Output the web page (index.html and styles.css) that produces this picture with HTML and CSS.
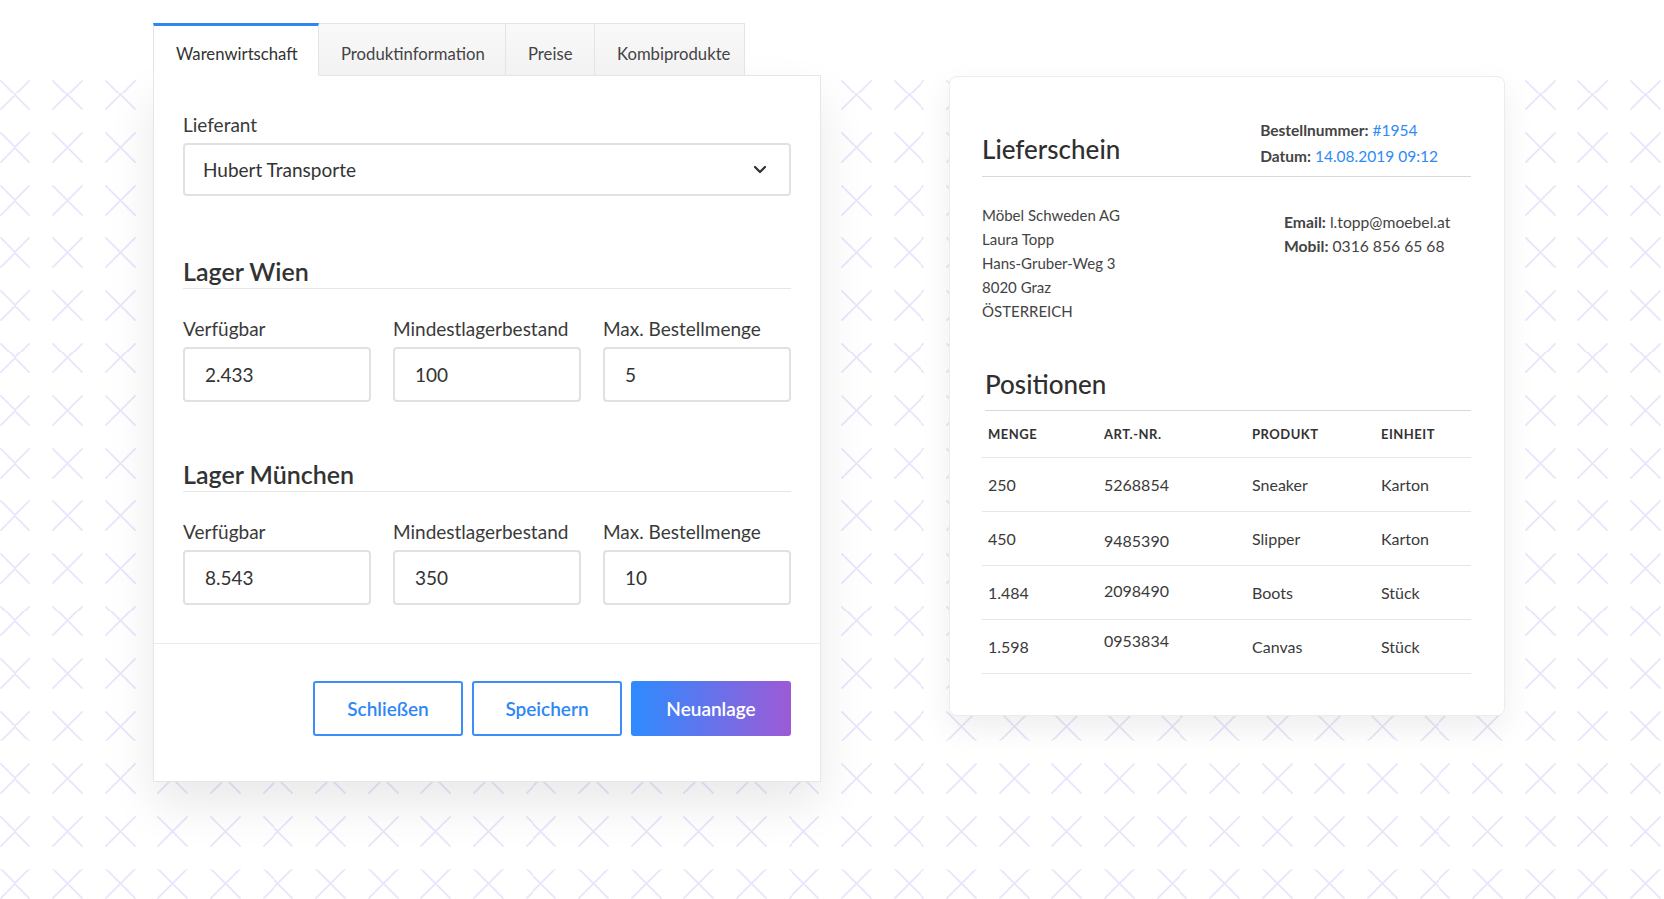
FILE: index.html
```html
<!DOCTYPE html>
<html lang="de">
<head>
    <meta charset="UTF-8">
    <meta name="viewport" content="width=device-width, initial-scale=1.0">
    <title>Warenwirtschaft</title>
    <link rel="stylesheet" href="styles.css">
</head>
<body>
    <div class="scene">
        <!-- Produkt-Editor -->
        <section class="editor">
            <nav class="tabs">
                <div class="tab tab-active tab-stock">Warenwirtschaft</div>
                <div class="tab tab-info">Produktinformation</div>
                <div class="tab tab-price">Preise</div>
                <div class="tab tab-combo">Kombiprodukte</div>
                <div class="tab-fill"></div>
            </nav>

            <div class="panel">
                <div class="panel-body">
                    <div class="field field-supplier">
                        <div class="field-label">Lieferant</div>
                        <div class="select">
                            <span>Hubert Transporte</span>
                            <svg width="14" height="9" viewBox="0 0 14 9">
                                <path d="M2 2l5 5 5-5" fill="none" stroke="#2f2f2f" stroke-width="2.2" stroke-linecap="round" stroke-linejoin="round"/>
                            </svg>
                        </div>
                    </div>

                    <div class="stock">
                        <h2 class="stock-title">Lager Wien</h2>
                        <div class="stock-fields">
                            <div class="field">
                                <div class="field-label">Verfügbar</div>
                                <div class="input">2.433</div>
                            </div>
                            <div class="field">
                                <div class="field-label">Mindestlagerbestand</div>
                                <div class="input">100</div>
                            </div>
                            <div class="field">
                                <div class="field-label">Max. Bestellmenge</div>
                                <div class="input">5</div>
                            </div>
                        </div>
                    </div>

                    <div class="stock">
                        <h2 class="stock-title">Lager München</h2>
                        <div class="stock-fields">
                            <div class="field">
                                <div class="field-label">Verfügbar</div>
                                <div class="input">8.543</div>
                            </div>
                            <div class="field">
                                <div class="field-label">Mindestlagerbestand</div>
                                <div class="input">350</div>
                            </div>
                            <div class="field">
                                <div class="field-label">Max. Bestellmenge</div>
                                <div class="input">10</div>
                            </div>
                        </div>
                    </div>
                </div>

                <div class="panel-footer">
                    <button class="btn btn-outline">Schließen</button>
                    <button class="btn btn-outline">Speichern</button>
                    <button class="btn btn-primary">Neuanlage</button>
                </div>
            </div>
        </section>

        <!-- Lieferschein -->
        <section class="slip">
            <header class="slip-header">
                <h1 class="slip-title">Lieferschein</h1>
                <div class="slip-meta">
                    <div><b>Bestellnummer:</b> <span class="accent">#1954</span></div>
                    <div><b>Datum:</b> <span class="accent">14.08.2019 09:12</span></div>
                </div>
            </header>

            <div class="slip-address">
                <div>
                    <div>Möbel Schweden AG</div>
                    <div>Laura Topp</div>
                    <div>Hans-Gruber-Weg 3</div>
                    <div>8020 Graz</div>
                    <div>ÖSTERREICH</div>
                </div>
                <div class="slip-contact">
                    <div><b>Email:</b> l.topp@moebel.at</div>
                    <div><b>Mobil:</b> 0316 856 65 68</div>
                </div>
            </div>

            <h2 class="slip-subtitle">Positionen</h2>
            <table class="items">
                <thead>
                    <tr>
                        <th class="col-qty">Menge</th>
                        <th class="col-art">Art.-Nr.</th>
                        <th class="col-prod">Produkt</th>
                        <th>Einheit</th>
                    </tr>
                </thead>
                <tbody>
                    <tr>
                        <td>250</td>
                        <td>5268854</td>
                        <td>Sneaker</td>
                        <td>Karton</td>
                    </tr>
                    <tr>
                        <td>450</td>
                        <td class="low">9485390</td>
                        <td>Slipper</td>
                        <td>Karton</td>
                    </tr>
                    <tr>
                        <td>1.484</td>
                        <td class="high">2098490</td>
                        <td>Boots</td>
                        <td>Stück</td>
                    </tr>
                    <tr>
                        <td>1.598</td>
                        <td class="higher">0953834</td>
                        <td>Canvas</td>
                        <td>Stück</td>
                    </tr>
                </tbody>
            </table>
        </section>
    </div>
</body>
</html>
```

FILE: styles.css
```css
* {
    box-sizing: border-box;
}

body {
    margin: 0;
    min-height: 899px;
    font-family: 'Lato', 'Noto Sans', sans-serif;
    color: #333;
    background:
        linear-gradient(#fff, #fff) 0 0 / 100% 79px no-repeat,
        url("data:image/svg+xml,%3Csvg xmlns='http://www.w3.org/2000/svg' width='52.6' height='52.6'%3E%3Cpath d='M11.3 11.3l30 30M41.3 11.3l-30 30' stroke='%23e8e6fb' stroke-width='1.8' fill='none'/%3E%3C/svg%3E") -11.3px 68.7px / 52.6px 52.6px repeat,
        #fff;
}

.scene {
    display: flex;
    align-items: flex-start;
    padding: 23px 0 0 153px;
}

/* ---------- editor ---------- */

.editor {
    width: 668px;
}

.tabs {
    display: flex;
    height: 53px;
}

.tab {
    display: flex;
    align-items: center;
    padding: 8px 0 0 22px;
    font-size: 16.7px;
    color: #444;
    background: linear-gradient(#f9f9f9, #f2f2f2);
    border: 1px solid #e4e4e4;
    border-left: none;
}

.tab-active {
    background: #fff;
    color: #333;
    padding-top: 6px;
    border-top: 3px solid #2f86f2;
    border-left: 1px solid #e4e4e4;
    border-right: 1px solid #e4e4e4;
    border-bottom-color: #fff;
}

.tab-stock { width: 166px; }
.tab-info { width: 187px; }
.tab-price { width: 89px; }
.tab-combo { width: 150px; }

.tab-fill {
    flex: 1;
    border-bottom: 1px solid #e6e6e6;
}

.panel {
    background: #fff;
    border: 1px solid #e6e6e6;
    border-top: none;
    box-shadow: 0 22px 45px rgba(0, 0, 0, 0.09);
}

.panel-body {
    padding: 37px 29px 38px 29px;
}

.field-label {
    font-size: 19px;
    line-height: 24px;
    color: #3a3a3a;
    margin-bottom: 6px;
}

.field-supplier {
    padding-bottom: 3px;
}

.select,
.input {
    height: 55px;
    border: 2px solid #e1e1e1;
    border-radius: 4px;
    font-size: 19px;
    color: #333;
    display: flex;
    align-items: center;
    padding: 0 20px;
}

.select {
    height: 53px;
    justify-content: space-between;
    padding-left: 18px;
    padding-right: 22px;
}

.stock {
    margin-top: 57px;
}

.stock-title {
    margin: 0;
    font-size: 25px;
    line-height: 30px;
    font-weight: 600;
    color: #333;
    padding-bottom: 2px;
    border-bottom: 1px solid #e6e6e6;
}

.stock-fields {
    display: flex;
    gap: 22px;
    margin-top: 28px;
}

.stock-fields .field {
    flex: 1;
}

.panel-footer {
    display: flex;
    justify-content: flex-end;
    gap: 9px;
    padding: 37px 29px 45px;
    border-top: 1px solid #ebebeb;
}

.btn {
    width: 150px;
    height: 55px;
    padding: 0;
    font-family: inherit;
    font-size: 19px;
    font-weight: 600;
    border-radius: 3px;
    cursor: pointer;
}

.btn-outline {
    background: #fff;
    color: #2d87f6;
    border: 2px solid #3d8ef8;
}

.btn-primary {
    width: 160px;
    color: #fff;
    border: none;
    background: linear-gradient(90deg, #2d8bff, #9d5ad6);
}

/* ---------- lieferschein ---------- */

.slip {
    width: 556px;
    margin: 53px 0 0 128px;
    background: #fff;
    border: 1px solid #ececec;
    border-radius: 8px;
    box-shadow: 0 12px 32px rgba(0, 0, 0, 0.07);
    padding: 40px 33px 41px 32px;
}

.slip-header {
    display: flex;
    justify-content: space-between;
    align-items: flex-end;
    padding-bottom: 7px;
    border-bottom: 1px solid #d9d9d9;
}

.slip-title {
    margin: 0 0 5px;
    font-size: 26px;
    line-height: 30px;
    font-weight: 500;
    color: #2f2f2f;
}

.slip-meta {
    margin-right: 33px;
    font-size: 15.5px;
    line-height: 26px;
    color: #444;
}

.accent {
    color: #2e8af6;
}

.slip-address {
    display: grid;
    grid-template-columns: 302px 1fr;
    margin-top: 26px;
    font-size: 15px;
    line-height: 24px;
    color: #444;
}

.slip-contact {
    padding-top: 7px;
    font-size: 15.7px;
}

.slip-subtitle {
    margin: 46px 0 0 3px;
    padding-bottom: 11px;
    font-size: 26px;
    line-height: 30px;
    font-weight: 500;
    color: #2f2f2f;
    border-bottom: 1px solid #d9d9d9;
}

.items {
    width: 100%;
    border-collapse: collapse;
    table-layout: fixed;
}

.items th {
    height: 46px;
    padding: 0 6px;
    text-align: left;
    font-size: 13px;
    font-weight: 700;
    letter-spacing: 0.5px;
    text-transform: uppercase;
    color: #333;
    border-bottom: 1px solid #e6e6e6;
}

.items td {
    height: 54px;
    padding: 0 6px;
    font-size: 16px;
    color: #3a3a3a;
    border-bottom: 1px solid #e6e6e6;
}

.col-qty { width: 116px; }
.col-art { width: 148px; }
.col-prod { width: 129px; }

.items td.low { padding-top: 4px; }
.items td.high { padding-bottom: 4px; }
.items td.higher { padding-bottom: 12px; }
```
